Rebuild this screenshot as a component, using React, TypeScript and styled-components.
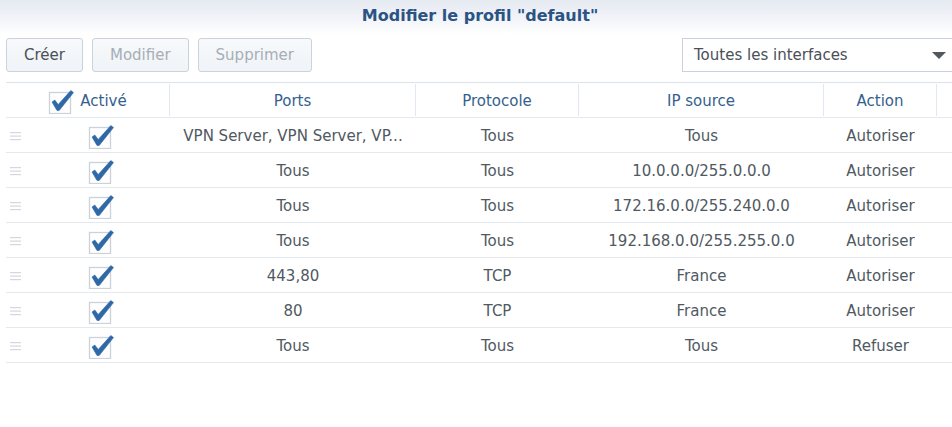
import React from "react";
import styled, { createGlobalStyle } from "styled-components";

const GlobalStyle = createGlobalStyle`
  html, body {
    margin: 0;
    padding: 0;
    background: #ffffff;
    overflow: hidden;
  }
  body {
    font-family: "DejaVu Sans", Verdana, sans-serif;
  }
`;

const Page = styled.div`
  width: 952px;
  height: 427px;
  overflow: hidden;
  background: #fff;
`;

const TitleBar = styled.div`
  height: 34px;
  display: flex;
  align-items: flex-start;
  justify-content: center;
  padding-top: 6px;
  box-sizing: border-box;
  background: linear-gradient(to bottom, #e5eaf1 0%, #f3f5f9 60%, #ffffff 100%);
  color: #2b5384;
  font-size: 16px;
  font-weight: bold;
  padding-left: 8px;
`;

const Toolbar = styled.div`
  display: flex;
  align-items: center;
  gap: 9px;
  padding: 4px 0 0 6px;
  height: 33px;
`;

const Button = styled.button<{ $disabled?: boolean }>`
  height: 34px;
  padding: 0 17px;
  border: 1px solid #c9d2dd;
  border-radius: 3px;
  background: linear-gradient(to bottom, #f7f9fb, #f0f3f7);
  color: ${(p) => (p.$disabled ? "#a6aeb7" : "#4a5058")};
  font-family: "DejaVu Sans", Verdana, sans-serif;
  font-size: 15px;
  padding-top: 1px;
  cursor: default;
`;

const Spacer = styled.div`
  flex: 1;
`;

const Select = styled.div`
  width: 272px;
  height: 34px;
  box-sizing: border-box;
  margin-right: -2px;
  border: 1px solid #c9d2dd;
  background: #fff;
  display: flex;
  align-items: center;
  justify-content: space-between;
  padding: 1px 7px 0 11px;
  color: #4a5058;
  font-size: 15px;
  flex-shrink: 0;
`;

const Arrow = styled.span`
  width: 0;
  height: 0;
  border-left: 7px solid transparent;
  border-right: 7px solid transparent;
  border-top: 7px solid #53585f;
`;

const Table = styled.div`
  margin: 11px 0 0 6px;
  border-top: 1px solid #dbe3ec;
`;

const cols = "24px 140px 246px 163px 245px 113px 1fr";

const HeadRow = styled.div`
  display: grid;
  grid-template-columns: 164px 246px 163px 245px 113px 1fr;
  height: 34px;
  border-bottom: 1px solid #e4e9ef;
`;

const HeadCell = styled.div<{ $last?: boolean }>`
  display: flex;
  align-items: center;
  justify-content: center;
  gap: 6px;
  padding-top: 2px;
  color: #355f8e;
  font-size: 15px;
  border-right: ${(p) => (p.$last ? "none" : "1px solid #e1e8f0")};
  margin: 1px 0;
`;

const Row = styled.div`
  display: grid;
  grid-template-columns: ${cols};
  height: 35px;
  border-bottom: 1px solid #e4e9ef;
  box-sizing: border-box;
`;

const Cell = styled.div`
  display: flex;
  align-items: center;
  justify-content: center;
  padding-top: 2px;
  color: #505962;
  font-size: 15px;
  white-space: nowrap;
  overflow: hidden;
`;

const Handle = styled.div`
  display: flex;
  align-items: center;
  padding: 2px 0 0 4px;
`;

const CheckWrap = styled.span<{ $shift?: number }>`
  display: inline-flex;
  width: 26px;
  height: 26px;
  margin-left: ${(p) => p.$shift ?? 0}px;
  margin-top: -1px;
`;

function Check({ shift }: { shift?: number }) {
  return (
    <CheckWrap $shift={shift}>
      <svg width="26" height="26" viewBox="0 0 26 26">
        <rect x="1.5" y="4.5" width="21" height="21" fill="#fff" stroke="#ccd2da" strokeWidth="1.3" />
        <path
          d="M4 14 L6.8 12 L10.2 16.5 L22.8 2.5 L25.5 4.6 L11.2 22.5 L9 22.5 Z"
          fill="#2f68a6"
          stroke="#2f68a6"
          strokeWidth="0.6"
          strokeLinejoin="round"
        />
      </svg>
    </CheckWrap>
  );
}

function Grip() {
  return (
    <svg width="12" height="10" viewBox="0 0 12 10">
      <rect x="0" y="1" width="11" height="1.2" fill="#d3d8de" />
      <rect x="0" y="4.5" width="11" height="1.2" fill="#d3d8de" />
      <rect x="0" y="8" width="11" height="1.2" fill="#d3d8de" />
    </svg>
  );
}

const rules = [
  ["VPN Server, VPN Server, VP...", "Tous", "Tous", "Autoriser"],
  ["Tous", "Tous", "10.0.0.0/255.0.0.0", "Autoriser"],
  ["Tous", "Tous", "172.16.0.0/255.240.0.0", "Autoriser"],
  ["Tous", "Tous", "192.168.0.0/255.255.0.0", "Autoriser"],
  ["443,80", "TCP", "France", "Autoriser"],
  ["80", "TCP", "France", "Autoriser"],
  ["Tous", "Tous", "Tous", "Refuser"],
];

export default function App() {
  return (
    <Page>
      <GlobalStyle />
      <TitleBar>Modifier le profil "default"</TitleBar>
      <Toolbar>
        <Button>Créer</Button>
        <Button $disabled>Modifier</Button>
        <Button $disabled>Supprimer</Button>
        <Spacer />
        <Select>
          <span>Toutes les interfaces</span>
          <Arrow />
        </Select>
      </Toolbar>
      <Table>
        <HeadRow>
          <HeadCell>
            <Check />
            <span>Activé</span>
          </HeadCell>
          <HeadCell>Ports</HeadCell>
          <HeadCell>Protocole</HeadCell>
          <HeadCell>IP source</HeadCell>
          <HeadCell>Action</HeadCell>
          <HeadCell $last />
        </HeadRow>
        {rules.map((r, i) => (
          <Row key={i}>
            <Handle>
              <Grip />
            </Handle>
            <Cell>
              <Check shift={1} />
            </Cell>
            <Cell>{r[0]}</Cell>
            <Cell>{r[1]}</Cell>
            <Cell>{r[2]}</Cell>
            <Cell>{r[3]}</Cell>
            <Cell />
          </Row>
        ))}
      </Table>
    </Page>
  );
}
